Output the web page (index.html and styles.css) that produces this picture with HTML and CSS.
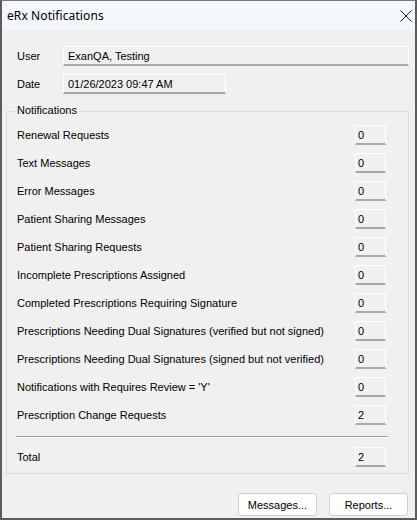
FILE: index.html
```html
<!DOCTYPE html>
<html>
<head>
<meta charset="utf-8">
<link rel="stylesheet" href="styles.css">
</head>
<body>
<div class="window">
  <div class="titlebar">
    <span class="title">eRx Notifications</span>
    <svg class="close" width="12" height="12" viewBox="0 0 12 12"><path d="M0.5 0.5 L11.5 11.5 M11.5 0.5 L0.5 11.5" stroke="#1a1a1a" stroke-width="1" fill="none"/></svg>
  </div>
  <div class="content">
    <div class="field-row">
      <span class="flabel">User</span>
      <div class="tb tb-user">ExanQA, Testing</div>
    </div>
    <div class="field-row">
      <span class="flabel">Date</span>
      <div class="tb tb-date">01/26/2023 09:47 AM</div>
    </div>
    <div class="group">
      <span class="legend">Notifications</span>
      <div class="nrow"><span>Renewal Requests</span><div class="box">0</div></div>
      <div class="nrow"><span>Text Messages</span><div class="box">0</div></div>
      <div class="nrow"><span>Error Messages</span><div class="box">0</div></div>
      <div class="nrow"><span>Patient Sharing Messages</span><div class="box">0</div></div>
      <div class="nrow"><span>Patient Sharing Requests</span><div class="box">0</div></div>
      <div class="nrow"><span>Incomplete Prescriptions Assigned</span><div class="box">0</div></div>
      <div class="nrow"><span>Completed Prescriptions Requiring Signature</span><div class="box">0</div></div>
      <div class="nrow"><span>Prescriptions Needing Dual Signatures (verified but not signed)</span><div class="box">0</div></div>
      <div class="nrow"><span>Prescriptions Needing Dual Signatures (signed but not verified)</span><div class="box">0</div></div>
      <div class="nrow"><span>Notifications with Requires Review = 'Y'</span><div class="box">0</div></div>
      <div class="nrow"><span>Prescription Change Requests</span><div class="box">2</div></div>
      <div class="sep"></div>
      <div class="nrow last"><span>Total</span><div class="box">2</div></div>
    </div>
    <div class="buttons">
      <div class="btn">Messages...</div>
      <div class="btn">Reports...</div>
    </div>
  </div>
</div>
</body>
</html>
```
FILE: styles.css
```css
html, body {
  margin: 0;
  padding: 0;
  background: #f0f0f0;
}
.window {
  width: 417px;
  height: 520px;
  box-sizing: border-box;
  border: 2px solid #5c5c5c;
  border-top: 1px solid #7a7a7a;
  background: #f0f0f0;
  font-family: "Liberation Sans", Arial, sans-serif;
  font-size: 11px;
  color: #000;
  overflow: hidden;
}
.titlebar {
  height: 29px;
  background: #f3f6fb;
  display: flex;
  align-items: center;
  justify-content: space-between;
  padding: 0 3px 0 5px;
}
.title {
  font-family: "Noto Sans", "Open Sans", sans-serif;
  font-size: 12px;
  letter-spacing: 0.1px;
  color: #000;
}
.close {
  margin-top: 1px;
}
.content {
  padding: 16px 6px 0 4px;
}
.field-row {
  display: flex;
  align-items: center;
  height: 20px;
  margin-bottom: 8px;
  padding-left: 11px;
}
.field-row + .field-row {
  margin-bottom: 0;
}
.flabel {
  width: 46px;
}
.tb {
  box-sizing: border-box;
  height: 20px;
  border: 1px solid #ffffff;
  border-bottom: 2px solid #a8a8a8;
  padding-left: 4px;
  display: flex;
  align-items: center;
  background: #f0f0f0;
}
.tb-user {
  flex: 1;
}
.tb-date {
  width: 163px;
}
.group {
  position: relative;
  margin-top: 17px;
  border: 1px solid #dcdcdc;
  padding: 13px 22px 6px 10px;
}
.legend {
  position: absolute;
  top: -8px;
  left: 8px;
  padding: 0 2px;
  background: #f0f0f0;
}
.nrow {
  display: flex;
  justify-content: space-between;
  align-items: center;
  height: 20px;
  margin-bottom: 8px;
}
.nrow.last {
  margin-bottom: 0;
}
.nrow:nth-last-of-type(2) {
  margin-bottom: 0;
}
.box {
  box-sizing: border-box;
  width: 31px;
  height: 20px;
  border: 1px solid #ffffff;
  border-bottom: 2px solid #a8a8a8;
  padding-left: 2px;
  display: flex;
  align-items: center;
}
.sep {
  height: 1px;
  border-bottom: 1px solid #ffffff;
  background: #a0a0a0;
  margin: 11px -2px 9px -1px;
}
.buttons {
  display: flex;
  justify-content: flex-end;
  gap: 12px;
  margin-top: 19px;
  padding-right: 1px;
}
.btn {
  box-sizing: border-box;
  width: 79px;
  height: 23px;
  border: 1px solid #d0d0d0;
  border-radius: 3px;
  background: #fdfdfd;
  display: flex;
  align-items: center;
  justify-content: center;
}
```
